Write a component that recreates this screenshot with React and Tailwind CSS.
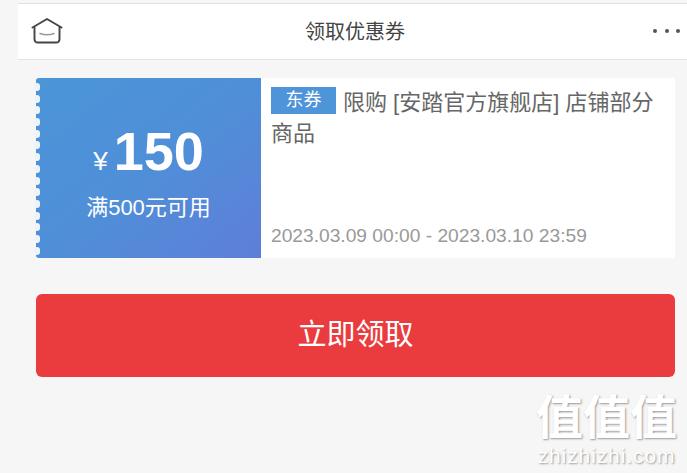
export default function App() {
  const font = { fontFamily: '"Liberation Sans", "Noto Sans CJK SC", sans-serif' };
  const dots = Array.from({ length: 15 });

  return (
    <div className="w-[687px] h-[473px] overflow-hidden relative bg-[#f6f6f6] pt-[3px]" style={font}>
      {/* header */}
      <div className="ml-[18px] h-[57px] bg-white border-t border-b border-[#e2e2e2] flex items-center relative">
        <svg className="ml-[13px] mt-[-2px]" width="32" height="26" viewBox="0 0 32 26" fill="none" stroke="#444" strokeWidth="1.9" strokeLinecap="round" strokeLinejoin="round">
          <path d="M1.5 9.5 L16 1 L30.5 9.5" />
          <path d="M3.5 9.5 V21 Q3.5 24.5 7 24.5 H25 Q28.5 24.5 28.5 21 V9.5" />
          <path d="M9 15.5 Q16 18 23 15.5" stroke="#999" strokeWidth="1.5" />
        </svg>
        <div className="absolute left-[5px] right-0 text-center text-[20px] text-[#444]">领取优惠券</div>
        <div className="absolute right-[7px] top-[25px] flex gap-[7.5px]">
          <span className="w-1 h-1 rounded-full bg-[#555]"></span>
          <span className="w-1 h-1 rounded-full bg-[#555]"></span>
          <span className="w-1 h-1 rounded-full bg-[#555]"></span>
        </div>
      </div>

      {/* coupon */}
      <div className="mt-[18px] ml-[36px] h-[180px] flex">
        <div className="w-[225px] relative rounded-l-[3px] bg-gradient-to-br from-[#4b95d8] via-[#4f8fd8] to-[#5e7ed8] flex flex-col items-center text-white">
          <div className="absolute left-[-2px] top-[5px] flex flex-col gap-[3.7px]">
            {dots.map((_, i) => (
              <span key={i} className="block w-[6px] h-[8px] rounded-full bg-[#eef3fa]"></span>
            ))}
          </div>
          <div className="flex items-baseline mt-[40px] h-[66px]">
            <span className="text-[26px] mr-[6px]">¥</span>
            <span className="text-[54px] leading-[66px] font-bold">150</span>
          </div>
          <div className="text-[22px] leading-[30px] mt-[9px]">满500元可用</div>
        </div>
        <div className="w-[414px] bg-white px-[10px] flex flex-col justify-between">
          <div className="text-[22px] leading-[31px] text-[#666] mt-[9px]">
            <span className="inline-block w-[65px] h-[27px] bg-[#4d94d8] text-white text-center text-[18px] leading-[27px] mr-[7px] align-top">东券</span>
            限购 [安踏官方旗舰店] 店铺部分商品
          </div>
          <div className="text-[19.2px] leading-[24px] text-[#999] mb-[10px]">2023.03.09 00:00 - 2023.03.10 23:59</div>
        </div>
      </div>

      {/* button */}
      <div className="mt-[36px] ml-[36px] w-[639px] h-[83px] rounded-[6px] bg-[#ea3b3e] text-white text-[29px] flex items-center justify-center pt-[1px]">立即领取</div>

      {/* watermark */}
      <div className="absolute left-[536px] top-[390px] w-[141px] text-center text-white [text-shadow:1px_1px_2px_#999]">
        <div className="text-[47px] leading-[56px] font-bold">值值值</div>
        <div className="text-[21px] leading-[24px] mt-[-2px] tracking-[0.9px] whitespace-nowrap">zhizhizhi.com</div>
      </div>
    </div>
  );
}
